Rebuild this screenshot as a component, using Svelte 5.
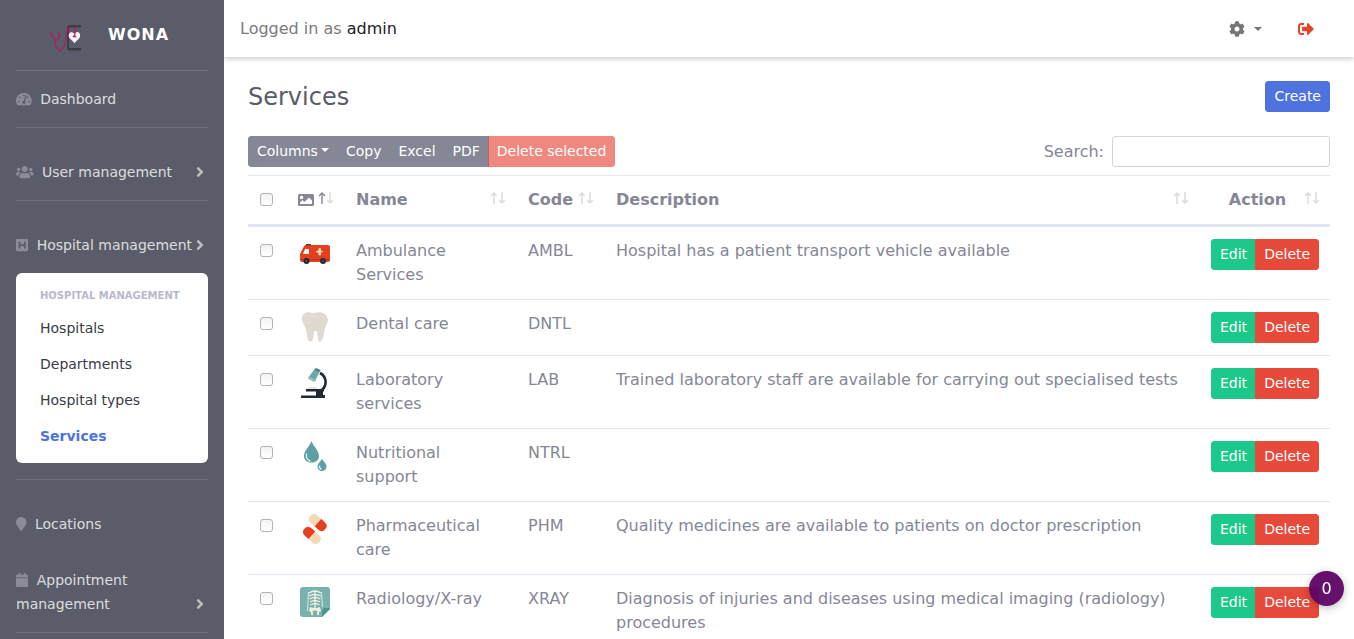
<script lang="ts">
    interface Service {
        icon: string;
        name: string;
        code: string;
        description: string;
    }

    interface Icon {
        width: number;
        d: string;
    }

    const services: Service[] = [
        { icon: "ambulance", name: "Ambulance Services", code: "AMBL", description: "Hospital has a patient transport vehicle available" },
        { icon: "tooth", name: "Dental care", code: "DNTL", description: "" },
        { icon: "microscope", name: "Laboratory services", code: "LAB", description: "Trained laboratory staff are available for carrying out specialised tests" },
        { icon: "drops", name: "Nutritional support", code: "NTRL", description: "" },
        { icon: "pills", name: "Pharmaceutical care", code: "PHM", description: "Quality medicines are available to patients on doctor prescription" },
        { icon: "xray", name: "Radiology/X-ray", code: "XRAY", description: "Diagnosis of injuries and diseases using medical imaging (radiology) procedures" },
    ];

    const subMenu = ["Hospitals", "Departments", "Hospital types", "Services"];
    const active = "Services";

    let selected: boolean[] = $state(services.map(() => false));
    let search = $state("");
    let allSelected = $derived(selected.every((v) => v));

    function toggleAll() {
        const value = !allSelected;
        selected = services.map(() => value);
    }

    // every icon is 512 units high
    const icons: Record<string, Icon> = {
        dashboard: {
            width: 576,
            d: "M288 32C128.94 32 0 160.94 0 320c0 52.8 14.25 102.26 39.06 144.8 5.61 9.62 16.3 15.2 27.44 15.2h443c11.14 0 21.83-5.58 27.44-15.2C561.75 422.26 576 372.8 576 320c0-159.06-128.94-288-288-288zm0 64c14.71 0 26.58 10.13 30.32 23.65-1.11 2.26-2.64 4.23-3.45 6.67l-9.22 27.67c-5.13 3.49-10.97 6.01-17.64 6.01-17.67 0-32-14.33-32-32S270.33 96 288 96zM96 384c-17.67 0-32-14.33-32-32s14.33-32 32-32 32 14.33 32 32-14.33 32-32 32zm48-160c-17.67 0-32-14.33-32-32s14.33-32 32-32 32 14.33 32 32-14.33 32-32 32zm246.77-72.41l-61.33 184C343.13 347.33 352 364.54 352 384c0 11.72-3.38 22.55-8.88 32H232.88c-5.5-9.45-8.88-20.28-8.88-32 0-33.94 26.5-61.43 59.9-63.59l61.34-184.01c4.17-12.56 17.73-19.45 30.36-15.17 12.57 4.19 19.35 17.79 15.17 30.36zm14.66 57.2l15.52-46.55c3.47-1.29 7.13-2.23 11.05-2.23 17.67 0 32 14.33 32 32s-14.33 32-32 32c-11.38-.01-20.89-6.28-26.57-15.22zM480 384c-17.67 0-32-14.33-32-32s14.33-32 32-32 32 14.33 32 32-14.33 32-32 32z",
        },
        users: {
            width: 640,
            d: "M96 224c35.3 0 64-28.7 64-64s-28.7-64-64-64-64 28.7-64 64 28.7 64 64 64zm448 0c35.3 0 64-28.7 64-64s-28.7-64-64-64-64 28.7-64 64 28.7 64 64 64zm32 32h-64c-17.6 0-33.5 7.1-45.1 18.6 40.3 22.1 68.9 62 75.1 109.4h66c17.7 0 32-14.3 32-32v-32c0-35.3-28.7-64-64-64zm-256 0c61.9 0 112-50.1 112-112S381.9 32 320 32 208 82.1 208 144s50.1 112 112 112zm76.8 32h-8.3c-20.8 10-43.9 16-68.5 16s-47.6-6-68.5-16h-8.3C179.6 288 128 339.6 128 403.2V432c0 26.5 21.5 48 48 48h288c26.5 0 48-21.5 48-48v-28.8c0-63.6-51.6-115.2-115.2-115.2zm-223.7-13.4C161.5 263.1 145.6 256 128 256H64c-35.3 0-64 28.7-64 64v32c0 17.7 14.3 32 32 32h65.9c6.3-47.4 34.9-87.3 75.2-109.4z",
        },
        hospital: {
            width: 448,
            d: "M448 80v352c0 26.51-21.49 48-48 48H48c-26.51 0-48-21.49-48-48V80c0-26.51 21.49-48 48-48h352c26.51 0 48 21.49 48 48zm-112 48h-32c-8.837 0-16 7.163-16 16v80H160v-80c0-8.837-7.163-16-16-16h-32c-8.837 0-16 7.163-16 16v224c0 8.837 7.163 16 16 16h32c8.837 0 16-7.163 16-16v-80h128v80c0 8.837 7.163 16 16 16h32c8.837 0 16-7.163 16-16V144c0-8.837-7.163-16-16-16z",
        },
        marker: {
            width: 384,
            d: "M172.268 501.67C26.97 291.031 0 269.413 0 192 0 85.961 85.961 0 192 0s192 85.961 192 192c0 77.413-26.97 99.031-172.268 309.67-9.535 13.774-29.93 13.773-39.464 0z",
        },
        calendar: {
            width: 448,
            d: "M12 192h424c6.6 0 12 5.4 12 12v260c0 26.5-21.5 48-48 48H48c-26.5 0-48-21.5-48-48V204c0-6.6 5.4-12 12-12zm436-44v-36c0-26.5-21.5-48-48-48h-48V12c0-6.6-5.4-12-12-12h-40c-6.6 0-12 5.4-12 12v52H160V12c0-6.6-5.4-12-12-12h-40c-6.6 0-12 5.4-12 12v52H48C21.5 64 0 85.5 0 112v36c0 6.6 5.4 12 12 12h424c6.6 0 12-5.4 12-12z",
        },
        angle: {
            width: 256,
            d: "M224.3 273l-136 136c-9.4 9.4-24.6 9.4-33.9 0l-22.6-22.6c-9.4-9.4-9.4-24.6 0-33.9l96.4-96.4-96.4-96.4c-9.4-9.4-9.4-24.6 0-33.9L54.3 103c9.4-9.4 24.6-9.4 33.9 0l136 136c9.5 9.4 9.5 24.6.1 34z",
        },
        cog: {
            width: 512,
            d: "M487.4 315.7l-42.6-24.6c4.3-23.2 4.3-47 0-70.2l42.6-24.6c4.9-2.8 7.1-8.6 5.5-14-11.1-35.6-30-67.8-54.7-94.6-3.8-4.1-10-5.1-14.8-2.3L380.8 110c-17.9-15.4-38.5-27.3-60.8-35.1V25.8c0-5.6-3.9-10.5-9.4-11.7-36.7-8.2-74.3-7.8-109.2 0-5.5 1.2-9.4 6.1-9.4 11.7V75c-22.2 7.9-42.8 19.8-60.8 35.1L88.7 85.5c-4.9-2.8-11-1.9-14.8 2.3-24.7 26.7-43.6 58.9-54.7 94.6-1.7 5.4.6 11.2 5.5 14L67.3 221c-4.3 23.2-4.3 47 0 70.2l-42.6 24.6c-4.9 2.8-7.1 8.6-5.5 14 11.1 35.6 30 67.8 54.7 94.6 3.8 4.1 10 5.1 14.8 2.3l42.6-24.6c17.9 15.4 38.5 27.3 60.8 35.1v49.2c0 5.6 3.9 10.5 9.4 11.7 36.7 8.2 74.3 7.8 109.2 0 5.5-1.2 9.4-6.1 9.4-11.7v-49.2c22.2-7.9 42.8-19.8 60.8-35.1l42.6 24.6c4.9 2.8 11 1.9 14.8-2.3 24.7-26.7 43.6-58.9 54.7-94.6 1.5-5.5-.7-11.3-5.6-14.1zM256 336c-44.1 0-80-35.9-80-80s35.9-80 80-80 80 35.9 80 80-35.9 80-80 80z",
        },
        logout: {
            width: 512,
            d: "M497 273L329 441c-15 15-41 4.5-41-17v-96H152c-13.3 0-24-10.7-24-24v-96c0-13.3 10.7-24 24-24h136V88c0-21.4 25.9-32 41-17l168 168c9.3 9.4 9.3 24.6 0 34zM192 436v-40c0-6.6-5.4-12-12-12H96c-17.7 0-32-14.3-32-32V160c0-17.7 14.3-32 32-32h84c6.6 0 12-5.4 12-12V76c0-6.6-5.4-12-12-12H96c-53 0-96 43-96 96v192c0 53 43 96 96 96h84c6.6 0 12-5.4 12-12z",
        },
        image: {
            width: 512,
            d: "M464 448H48c-26.51 0-48-21.49-48-48V112c0-26.51 21.49-48 48-48h416c26.51 0 48 21.49 48 48v288c0 26.51-21.49 48-48 48zM112 120c-30.928 0-56 25.072-56 56s25.072 56 56 56 56-25.072 56-56-25.072-56-56-56zM64 384h384V272l-87.515-87.515c-4.686-4.686-12.284-4.686-16.971 0L208 320l-55.515-55.515c-4.686-4.686-12.284-4.686-16.971 0L64 336v48z",
        },
    };
</script>

{#snippet icon(name: string)}
    <svg class="icon" viewBox="0 0 {icons[name].width} 512" aria-hidden="true">
        <path d={icons[name].d} />
    </svg>
{/snippet}

{#snippet navLink(iconName: string, label: string, arrow: boolean)}
    <a class="nav-link" href="#{iconName}">
        <span class="nav-label">{@render icon(iconName)} {label}</span>
        {#if arrow}
            <span class="nav-arrow">{@render icon("angle")}</span>
        {/if}
    </a>
{/snippet}

{#snippet arrows(sorted: boolean)}
    <svg class="arrows" viewBox="0 0 16 12" aria-hidden="true">
        <path class:sorted d="M4 12V1M1 4l3-3 3 3" />
        <path d="M12 0v11M9 8l3 3 3-3" />
    </svg>
{/snippet}

<div class="wrapper">
    <nav class="sidebar">
        <a class="brand" href="#home">
            <svg class="logo" viewBox="2 -6 36 46" aria-hidden="true">
                <path d="M33 7H21.500q-2.500 0-2.500 2.500V30q0 2.500 2.500 2.500H33V30H21V9.500h12z" fill="#3c3d45" />
                <path d="M2.500 14 5 20l2.500 2.500L11 20v-6M6.500 22.500 8 29l4 4 4-4 1.500-5 1-10q1-4.500 5.500-4.500 3 0 4.500 3" fill="none" stroke="#b5176b" stroke-width="1.200" />
                <path d="M26.500 25 21.500 20q-2-3 .5-5.500 3-1 4.500 1.500Q28.500 13 31 14.500q2 2.500.5 5.500z" fill="#f4f3fa" />
                <path d="m26.500 13 .5 4-1.500 1.500 3 .5" fill="none" stroke="#b5176b" stroke-width="1.200" />
            </svg>
            <span>WONA</span>
        </a>
        <hr />
        {@render navLink("dashboard", "Dashboard", false)}
        <hr class="spaced" />
        {@render navLink("users", "User management", true)}
        <hr class="spaced" />
        {@render navLink("hospital", "Hospital management", true)}
        <div class="submenu">
            <h6>Hospital management</h6>
            {#each subMenu as item}
                <a href="#{item}" class:active={item == active}>{item}</a>
            {/each}
        </div>
        <hr class="spaced" />
        {@render navLink("marker", "Locations", false)}
        {@render navLink("calendar", "Appointment management", true)}
        <hr class="spaced" />
    </nav>

    <div class="content">
        <header class="topbar">
            <span>Logged in as <a class="user" href="#admin">admin</a></span>
            <div class="topbar-actions">
                <button class="settings" aria-label="Settings">
                    {@render icon("cog")}
                    <span class="caret"></span>
                </button>
                <a class="logout" href="#logout" aria-label="Log out">{@render icon("logout")}</a>
            </div>
        </header>

        <main>
            <div class="heading">
                <h1>Services</h1>
                <button class="btn primary">Create</button>
            </div>

            <div class="toolbar">
                <div class="group">
                    <button class="btn secondary">Columns<span class="caret"></span></button>
                    <button class="btn secondary">Copy</button>
                    <button class="btn secondary">Excel</button>
                    <button class="btn secondary">PDF</button>
                    <button class="btn danger" disabled={!selected.some((v) => v)}>Delete selected</button>
                </div>
                <label class="search">
                    Search:
                    <input type="search" bind:value={search} />
                </label>
            </div>

            <table>
                <colgroup>
                    <col class="col-check" />
                    <col class="col-image" />
                    <col class="col-name" />
                    <col class="col-code" />
                    <col />
                    <col class="col-action" />
                </colgroup>
                <thead>
                    <tr>
                        <th>
                            <input type="checkbox" aria-label="Select all" checked={allSelected} onchange={toggleAll} />
                        </th>
                        <th><button class="sort" aria-label="Image">{@render icon("image")}{@render arrows(true)}</button></th>
                        <th><button class="sort">Name{@render arrows(false)}</button></th>
                        <th><button class="sort">Code{@render arrows(false)}</button></th>
                        <th><button class="sort">Description{@render arrows(false)}</button></th>
                        <th><button class="sort"><span class="centered">Action</span>{@render arrows(false)}</button></th>
                    </tr>
                </thead>
                <tbody>
                    {#each services as service, i}
                        <tr>
                            <td><input type="checkbox" aria-label="Select {service.name}" bind:checked={selected[i]} /></td>
                            <td class="picture">
                                <svg viewBox="0 0 30 30" aria-hidden="true">
                                    {#if service.icon == "ambulance"}
                                        <path d="M0 21v-6l3-6q1-3 3-3h22q2 0 2 2v13q0 2-2 2H2q-2 0-2-2z" fill="#e2401f" />
                                        <path d="M6 5h5v1.500H6z" fill="#7c2a25" />
                                        <path d="M5 10h4v5H3z" fill="#fdf3e6" />
                                        <path d="M0 20h30v1H0z" fill="#b93424" />
                                        <path d="m16 12.500 3-.5V9.500h1.500V12l2 .5-2 .8V16H19v-2.500z" fill="#fbd9b8" stroke="#fbd9b8" />
                                        <circle cx="6.500" cy="22" r="3" fill="#262b33" />
                                        <circle cx="23" cy="22" r="3" fill="#262b33" />
                                        <circle cx="6.500" cy="22" r="1" fill="#55565b" />
                                        <circle cx="23" cy="22" r="1" fill="#55565b" />
                                    {:else if service.icon == "tooth"}
                                        <path d="M7 .5c3-1 5.500 1 8 .5 3-1 6-1.500 9 .5 4 2.500 5 7 2.500 11-1.500 3-2 5-2.500 9-.5 5-2.500 8.500-4.500 8-2-.5-1.500-5-2.500-9-.5-2-2.500-2-3 0-.5 4-.5 9-3.500 9-4-1-3-7-4.500-12C5 14 1 9 2 5c.5-2.500 2.500-4 5-4.500z" fill="#dfd9cf" />
                                        <path d="M11 4c3 1 5 2 8 .5M5 5q1 4 4 7" fill="none" stroke="#e5e0d7" />
                                    {:else if service.icon == "microscope"}
                                        <path d="m15 .5 5 2.500-5 10-7-3z" fill="#67aaa6" />
                                        <path d="m9 8.500 7 3.500-1.500 2L8 11z" fill="#8cc3bd" />
                                        <path d="M16 0 20.500 2l-1 2-5-2z" fill="#4d8581" />
                                        <path d="M20 5c6 3 8 11 2 17" fill="none" stroke="#202a33" stroke-width="2.600" />
                                        <path d="M6 21h18v2.500h-1V27h2v3H1v-2.500h15v-4H6z" fill="#202a33" />
                                        <path d="M8 20h9" stroke="#c9cccf" />
                                    {:else if service.icon == "drops"}
                                        <path d="M11.500 0C13 5 19 9.500 19 15c0 4-3 6.500-7.500 6.500S4 19 4 15C4 9.500 10 5 11.500 0z" fill="#5da0a1" />
                                        <path d="M22 17.500c.8 3 4.500 4.500 4.500 8 0 2.900-2 4.500-4.500 4.500s-4.500-1.600-4.500-4.500c0-3.500 3.700-5 4.500-8z" fill="#5da0a1" />
                                        <path d="M6.500 13q-1 5 3.500 7M19.500 25q-.5 2 1.500 3" fill="none" stroke="#d8eceb" stroke-width="1.400" stroke-linecap="round" />
                                    {:else if service.icon == "pills"}
                                        <g transform="rotate(42 18.500 8.500)">
                                            <path d="M18 4h5q5 0 5 5t-5 5h-5z" fill="#e2401f" />
                                            <path d="M18 4h-5q-5 0-5 5t5 5h5z" fill="#f5d9b5" />
                                        </g>
                                        <g transform="rotate(42 11.500 21)">
                                            <path d="M12 16h5q5 0 5 5t-5 5h-5z" fill="#f5d9b5" />
                                            <path d="M12 16H7q-5 0-5 5t5 5h5z" fill="#e2401f" />
                                        </g>
                                    {:else}
                                        <path d="M3 0h24q3 0 3 3v19l-8 8H3q-3 0-3-3V3q0-3 3-3z" fill="#79b2ad" />
                                        <path d="M30 21v1l-8 8v-5q0-4 4-4z" fill="#4b9690" />
                                        <path d="M15 3v20M9 6q6-4 12 0M9 9q6-3 12 0M9.500 12q5.500-3 11 0M10 15q5-3 10 0M10.500 18q4.500-3 9 0" fill="none" stroke="#f1eee2" stroke-width="1.300" />
                                        <path d="M8.500 5 7.500 24M21.500 5l1 15" stroke="#dcebe2" />
                                        <path d="M10 20q5 2 10 0l1 4q-3 2-5-.5h-2q-2 2.500-5 .5zM11 25h2v3h-2zM17 25h2v3h-2z" fill="#f1eee2" />
                                    {/if}
                                </svg>
                            </td>
                            <td>{service.name}</td>
                            <td>{service.code}</td>
                            <td>{service.description}</td>
                            <td>
                                <div class="group">
                                    <button class="btn success">Edit</button>
                                    <button class="btn danger">Delete</button>
                                </div>
                            </td>
                        </tr>
                    {/each}
                </tbody>
            </table>
        </main>
    </div>
</div>

<button class="counter">0</button>

<style>
    :global(body) {
        margin: 0;
        background: #fff;
        color: #858796;
        font-family: "DejaVu Sans", sans-serif;
        font-size: 16px;
        line-height: 24px;
    }

    :global(::-webkit-scrollbar) {
        display: none;
    }

    a {
        text-decoration: none;
        color: inherit;
    }

    button {
        font: inherit;
        color: inherit;
        background: none;
        border: none;
        padding: 0;
        cursor: pointer;
    }

    .icon {
        height: 16px;
        fill: currentColor;
    }

    .wrapper {
        display: flex;
        min-height: 100vh;
    }

    .sidebar {
        flex: none;
        z-index: 1;
        width: 224px;
        background: #5a5c69;
        color: rgba(255, 255, 255, 0.8);
    }

    .brand {
        display: flex;
        align-items: center;
        gap: 22px;
        height: 70px;
        padding-left: 50px;
        color: #fff;
        font-weight: bold;
        letter-spacing: 1px;
    }

    .logo {
        width: 36px;
        height: 46px;
        flex: none;
    }

    hr {
        margin: 0 16px;
        border: 0;
        border-top: 1px solid rgba(255, 255, 255, 0.15);
    }

    .spaced {
        margin-bottom: 16px;
    }

    .nav-link {
        display: flex;
        align-items: flex-end;
        padding: 16px;
        font-size: 14px;
    }

    .nav-label {
        flex: 1;
    }

    .nav-label .icon {
        height: 14px;
        margin-right: 4px;
        vertical-align: -2px;
        color: rgba(255, 255, 255, 0.3);
    }

    .nav-arrow {
        display: flex;
        align-items: center;
        width: 12px;
        height: 24px;
        color: rgba(255, 255, 255, 0.6);
    }

    .submenu {
        margin: 0 16px 16px;
        padding: 8px 0 9px;
        background: #fff;
        border-radius: 6px;
        font-size: 14px;
    }

    .submenu h6 {
        margin: 0;
        padding: 8px 24px;
        color: #b7b9cc;
        font-size: 10px;
        line-height: 13px;
        text-transform: uppercase;
        white-space: nowrap;
    }

    .submenu a {
        display: block;
        margin: 0 8px;
        padding: 8px 16px;
        color: #3a3b45;
        line-height: 20px;
    }

    .submenu .active {
        color: #4e73df;
        font-weight: bold;
    }

    .content {
        flex: 1;
        min-width: 0;
    }

    .topbar {
        display: flex;
        align-items: center;
        justify-content: space-between;
        height: 57px;
        padding: 0 40px 0 16px;
        box-shadow: 0 2px 5px rgba(0, 0, 0, 0.2);
        color: #7b7b7b;
    }

    .user {
        color: #212121;
    }

    .topbar-actions {
        display: flex;
        align-items: center;
        gap: 36px;
    }

    .settings {
        display: flex;
        align-items: center;
        gap: 9px;
        color: #757575;
    }

    .logout {
        display: flex;
        color: #e5432d;
    }

    .caret {
        display: inline-block;
        border-top: 4px solid;
        border-left: 4px solid transparent;
        border-right: 4px solid transparent;
    }

    main {
        padding: 24px;
    }

    .heading {
        display: flex;
        align-items: center;
        justify-content: space-between;
        margin-bottom: 24px;
    }

    h1 {
        margin: 0;
        color: #5a5c69;
        font-size: 24px;
        font-weight: normal;
        line-height: 28px;
    }

    .btn {
        padding: 4px 8px;
        border: 1px solid transparent;
        border-radius: 3px;
        color: #fff;
        font-size: 14px;
        line-height: 21px;
        white-space: nowrap;
    }

    .btn:disabled {
        opacity: 0.65;
        cursor: default;
    }

    .btn .caret {
        margin-left: 3px;
        vertical-align: 4px;
    }

    .primary {
        background: #4e73df;
        border-color: #4e73df;
    }

    .secondary {
        background: #858796;
        border-color: #858796;
    }

    .danger {
        background: #e74a3b;
        border-color: #e74a3b;
    }

    .success {
        background: #1cc88a;
        border-color: #1cc88a;
    }

    .group {
        display: flex;
    }

    .group .btn:not(:first-child) {
        margin-left: -1px;
        border-top-left-radius: 0;
        border-bottom-left-radius: 0;
    }

    .group .btn:not(:last-child) {
        border-top-right-radius: 0;
        border-bottom-right-radius: 0;
    }

    .toolbar {
        display: flex;
        align-items: center;
        justify-content: space-between;
        margin-bottom: 8px;
    }

    .search {
        display: flex;
        align-items: center;
        gap: 8px;
    }

    .search input {
        box-sizing: border-box;
        width: 218px;
        height: 31px;
        padding: 4px 8px;
        border: 1px solid #d1d3e2;
        border-radius: 3px;
        color: #6e707e;
        font: inherit;
        font-size: 14px;
        outline: none;
    }

    table {
        width: 100%;
        table-layout: fixed;
        border-spacing: 0;
    }

    .col-check {
        width: 38px;
    }

    .col-image {
        width: 58px;
    }

    .col-name {
        width: 172px;
    }

    .col-code {
        width: 88px;
    }

    .col-action {
        width: 131px;
    }

    th,
    td {
        padding: 12px;
        border-top: 1px solid #e3e6f0;
        text-align: left;
        vertical-align: top;
    }

    th {
        padding-right: 10px;
        border-bottom: 2px solid #e3e6f0;
    }

    .sort {
        display: flex;
        justify-content: space-between;
        width: 100%;
        height: 24px;
        font-weight: bold;
    }

    .sort .icon {
        align-self: center;
    }

    .centered {
        flex: 1;
        text-align: center;
    }

    .arrows {
        width: 16px;
        height: 12px;
        margin-top: 4px;
        fill: none;
        stroke: currentColor;
        stroke-width: 1.4;
    }

    .arrows path {
        opacity: 0.3;
    }

    .arrows .sorted {
        opacity: 1;
    }

    input[type="checkbox"] {
        display: block;
        appearance: none;
        box-sizing: border-box;
        width: 13px;
        height: 13px;
        margin: 5px 0 0;
        border: 1px solid #b2b2b2;
        border-radius: 3px;
        background: linear-gradient(#f3f3f3, #fff);
    }

    input[type="checkbox"]:checked {
        background: #4e73df;
    }

    .picture svg {
        display: block;
        width: 30px;
        height: 30px;
        margin-left: 2px;
    }

    .counter {
        position: fixed;
        right: 10px;
        bottom: 33px;
        width: 35px;
        height: 35px;
        border-radius: 50%;
        background: rgba(93, 4, 100, 0.95);
        box-shadow: 0 2px 8px rgba(0, 0, 0, 0.25);
        color: #fff;
    }
</style>
